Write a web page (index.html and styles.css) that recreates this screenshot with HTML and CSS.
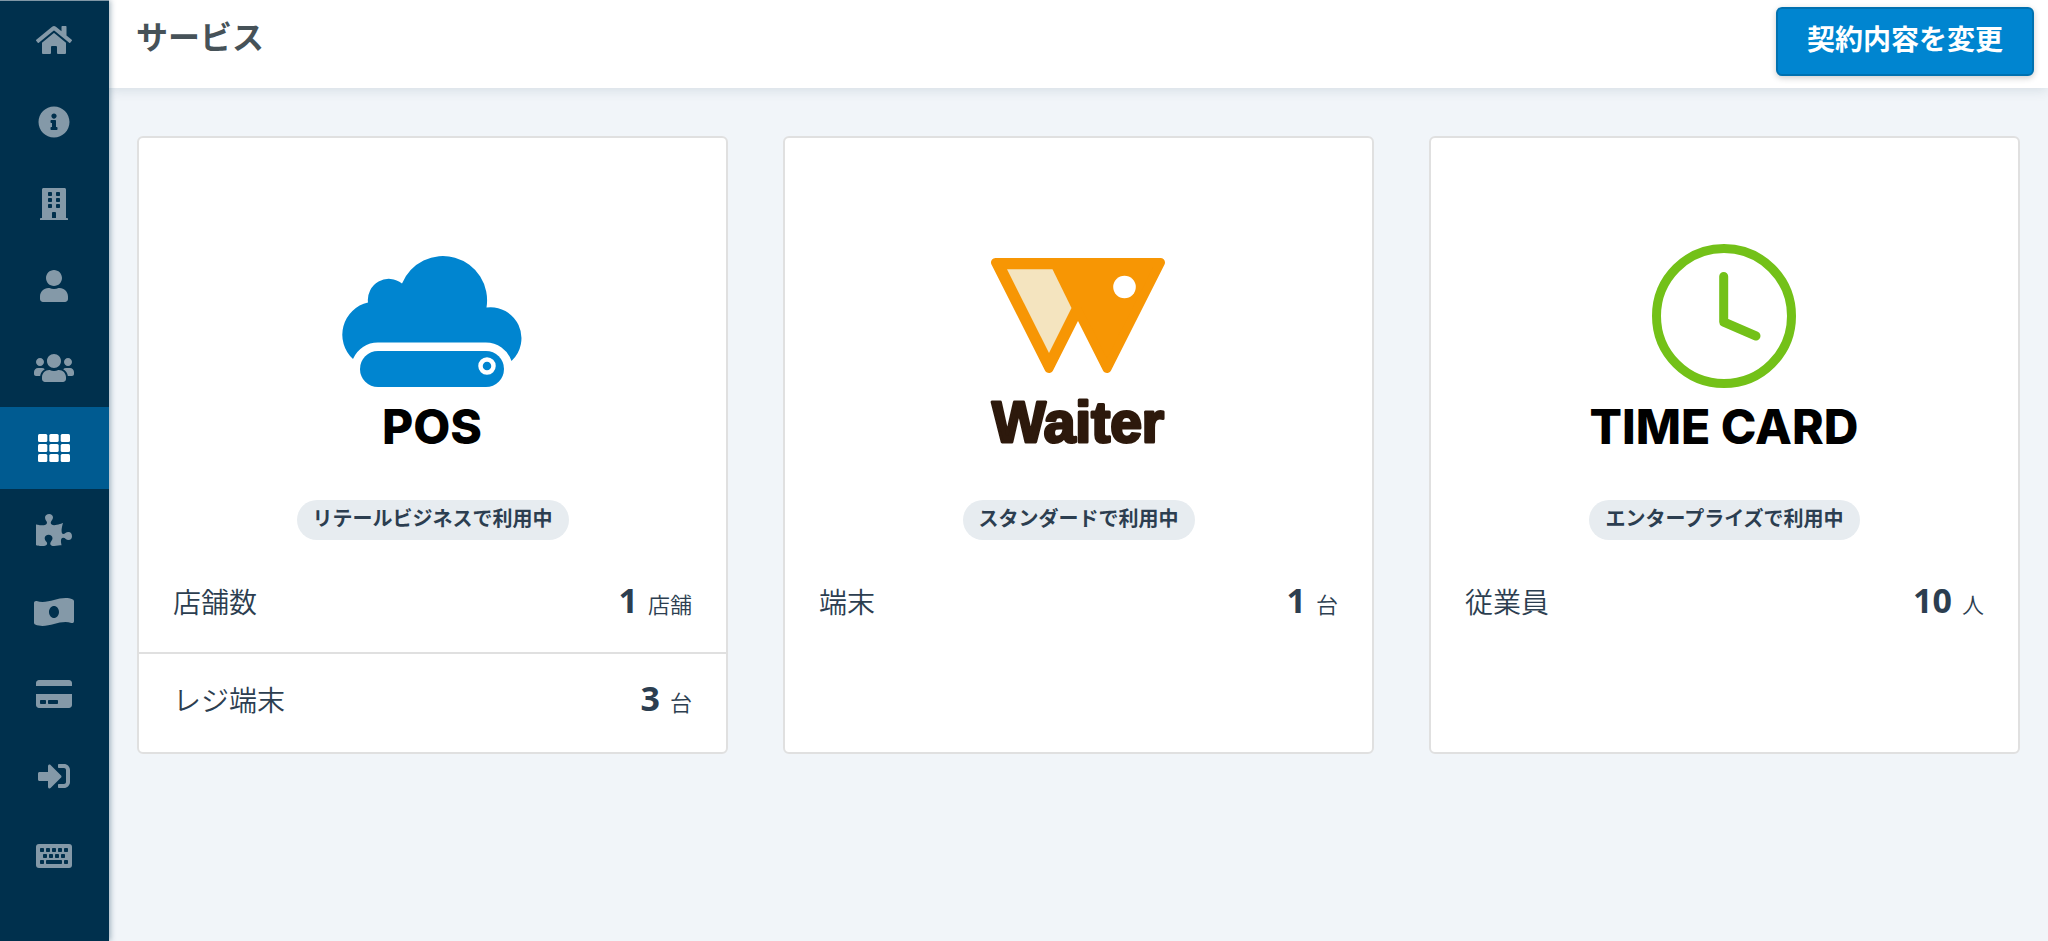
FILE: index.html
```html
<!DOCTYPE html>
<html lang="ja">
<head>
  <meta charset="UTF-8" />
  <meta name="viewport" content="width=device-width, initial-scale=1.0" />
  <title>サービス</title>
  <link rel="stylesheet" href="styles.css">
</head>
<body>
  <nav class="sidebar">
    <ul class="menu">
      <li><a href="#" aria-label="ホーム">
        <svg class="icon" viewBox="0 0 576 512" width="36" height="32"><path d="M280.37 148.26L96 300.11V464a16 16 0 0 0 16 16l112.06-.29a16 16 0 0 0 15.92-16V368a16 16 0 0 1 16-16h64a16 16 0 0 1 16 16v95.64a16 16 0 0 0 16 16.05L464 480a16 16 0 0 0 16-16V300L295.67 148.26a12.19 12.19 0 0 0-15.3 0zM571.6 251.47L488 182.56V44.05a12 12 0 0 0-12-12h-56a12 12 0 0 0-12 12v72.61L318.47 43a48 48 0 0 0-61 0L4.34 251.47a12 12 0 0 0-1.6 16.9l25.5 31A12 12 0 0 0 45.15 301l235.22-193.74a12.19 12.19 0 0 1 15.3 0L530.9 301a12 12 0 0 0 16.9-1.6l25.5-31a12 12 0 0 0-1.7-16.93z"/></svg>
      </a></li>
      <li><a href="#" aria-label="お知らせ">
        <svg class="icon" viewBox="0 0 512 512" width="32" height="32"><path d="M256 8C119.043 8 8 119.083 8 256c0 136.997 111.043 248 248 248s248-111.003 248-248C504 119.083 392.957 8 256 8zm0 110c23.196 0 42 18.804 42 42s-18.804 42-42 42-42-18.804-42-42 18.804-42 42-42zm56 254c0 6.627-5.373 12-12 12h-88c-6.627 0-12-5.373-12-12v-24c0-6.627 5.373-12 12-12h12v-64h-12c-6.627 0-12-5.373-12-12v-24c0-6.627 5.373-12 12-12h64c6.627 0 12 5.373 12 12v100h12c6.627 0 12 5.373 12 12v24z"/></svg>
      </a></li>
      <li><a href="#" aria-label="会社">
        <svg class="icon" viewBox="0 0 448 512" width="28" height="32">
          <path d="M436 480h-20V24c0-13.255-10.745-24-24-24H56C42.745 0 32 10.745 32 24v456H12c-6.627 0-12 5.373-12 12v20h448v-20c0-6.627-5.373-12-12-12z"/>
          <g class="hole">
            <rect x="128" y="64" width="64" height="64" rx="12"/><rect x="256" y="64" width="64" height="64" rx="12"/>
            <rect x="128" y="160" width="64" height="64" rx="12"/><rect x="256" y="160" width="64" height="64" rx="12"/>
            <rect x="128" y="256" width="64" height="64" rx="12"/><rect x="256" y="256" width="64" height="64" rx="12"/>
            <path d="M192 480v-84c0-6.627 5.373-12 12-12h40c6.627 0 12 5.373 12 12v84z"/>
          </g>
        </svg>
      </a></li>
      <li><a href="#" aria-label="ユーザー">
        <svg class="icon" viewBox="0 0 448 512" width="28" height="32"><path d="M224 256c70.7 0 128-57.3 128-128S294.7 0 224 0 96 57.3 96 128s57.3 128 128 128zm89.6 32h-16.7c-22.2 10.2-46.9 16-72.9 16s-50.6-5.8-72.9-16h-16.7C60.2 288 0 348.2 0 422.4V464c0 26.5 21.5 48 48 48h352c26.5 0 48-21.5 48-48v-41.6c0-74.2-60.2-134.4-134.4-134.4z"/></svg>
      </a></li>
      <li><a href="#" aria-label="メンバー">
        <svg class="icon" viewBox="0 0 640 512" width="40" height="32"><path d="M96 224c35.3 0 64-28.7 64-64s-28.7-64-64-64-64 28.7-64 64 28.7 64 64 64zm448 0c35.3 0 64-28.7 64-64s-28.7-64-64-64-64 28.7-64 64 28.7 64 64 64zm32 32h-64c-17.6 0-33.5 7.1-45.1 18.6 40.3 22.1 68.9 62 75.1 109.4h66c17.7 0 32-14.3 32-32v-32c0-35.3-28.7-64-64-64zm-256 0c61.9 0 112-50.1 112-112S381.9 32 320 32 208 82.1 208 144s50.1 112 112 112zm76.8 32h-8.3c-20.8 10-43.9 16-68.5 16s-47.6-6-68.5-16h-8.3C179.6 288 128 339.6 128 403.2V432c0 26.5 21.5 48 48 48h288c26.5 0 48-21.5 48-48v-28.8c0-63.6-51.6-115.2-115.2-115.2zm-223.7-13.4C161.5 263.1 145.6 256 128 256H64c-35.3 0-64 28.7-64 64v32c0 17.7 14.3 32 32 32h65.9c6.3-47.4 34.9-87.3 75.2-109.4z"/></svg>
      </a></li>
    </ul>
    <ul class="menu">
      <li class="active"><a href="#" aria-label="サービス">
        <svg class="icon" viewBox="0 0 512 512" width="32" height="32">
          <rect x="0" y="32" width="149" height="128" rx="24"/><rect x="181" y="32" width="150" height="128" rx="24"/><rect x="363" y="32" width="149" height="128" rx="24"/>
          <rect x="0" y="192" width="149" height="128" rx="24"/><rect x="181" y="192" width="150" height="128" rx="24"/><rect x="363" y="192" width="149" height="128" rx="24"/>
          <rect x="0" y="352" width="149" height="128" rx="24"/><rect x="181" y="352" width="150" height="128" rx="24"/><rect x="363" y="352" width="149" height="128" rx="24"/>
        </svg>
      </a></li>
      <li><a href="#" aria-label="アプリ連携">
        <svg class="icon" viewBox="0 0 576 512" width="36" height="32"><path d="M519.442 288.651c-41.519 0-59.5 31.593-82.058 31.593C377.409 320.244 432 144 432 144s-196.288 80-196.288-3.297c0-35.827 36.288-46.25 36.288-85.985C272 19.216 243.885 0 210.539 0c-34.654 0-66.366 18.891-66.366 56.346 0 41.364 31.711 59.277 31.711 81.75C175.885 207.719 0 166.758 0 166.758v333.237s178.635 41.047 178.635-28.662c0-22.473-40-40.107-40-81.471 0-37.456 29.25-56.346 63.577-56.346 33.673 0 61.788 19.216 61.788 54.717 0 39.735-36.288 50.158-36.288 85.985 0 60.803 129.675 25.73 181.23 25.73 0 0-34.725-120.101 25.827-120.101 35.962 0 46.423 36.152 86.308 36.152C556.712 416 576 387.99 576 354.443c0-34.199-18.962-65.792-56.558-65.792z"/></svg>
      </a></li>
      <li><a href="#" aria-label="請求">
        <svg class="icon" viewBox="0 0 640 512" width="40" height="32"><path d="M621.16 54.46C582.37 38.19 543.55 32 504.75 32c-123.17-.01-246.33 62.34-369.5 62.34-30.89 0-61.76-3.92-92.65-13.72-3.47-1.1-6.95-1.62-10.35-1.62C15.04 79 0 92.32 0 110.81v317.26c0 12.63 7.23 24.6 18.84 29.46C57.63 473.81 96.45 480 135.25 480c123.17 0 246.34-62.35 369.51-62.35 30.89 0 61.76 3.92 92.65 13.72 3.47 1.1 6.95 1.62 10.35 1.62 17.21 0 32.25-13.32 32.25-31.81V83.93c-.01-12.64-7.24-24.6-18.85-29.47zM320 352c-44.19 0-80-42.99-80-96 0-53.02 35.82-96 80-96s80 42.98 80 96c0 53.03-35.83 96-80 96z"/></svg>
      </a></li>
      <li><a href="#" aria-label="お支払い">
        <svg class="icon" viewBox="0 0 576 512" width="36" height="32"><path d="M0 432c0 26.5 21.5 48 48 48h480c26.5 0 48-21.5 48-48V256H0v176zm192-68c0-6.6 5.4-12 12-12h136c6.6 0 12 5.4 12 12v40c0 6.6-5.4 12-12 12H204c-6.6 0-12-5.4-12-12v-40zm-128 0c0-6.6 5.4-12 12-12h72c6.6 0 12 5.4 12 12v40c0 6.6-5.4 12-12 12H76c-6.6 0-12-5.4-12-12v-40zM576 80v48H0V80c0-26.5 21.5-48 48-48h480c26.5 0 48 21.5 48 48z"/></svg>
      </a></li>
      <li><a href="#" aria-label="ログイン">
        <svg class="icon" viewBox="0 0 512 512" width="32" height="32"><path d="M416 448h-84c-6.6 0-12-5.4-12-12v-40c0-6.6 5.4-12 12-12h84c17.7 0 32-14.3 32-32V160c0-17.7-14.3-32-32-32h-84c-6.6 0-12-5.4-12-12V76c0-6.6 5.4-12 12-12h84c53 0 96 43 96 96v192c0 53-43 96-96 96zm-47-201L201 79c-15-15-41-4.5-41 17v96H24c-13.3 0-24 10.7-24 24v96c0 13.3 10.7 24 24 24h136v96c0 21.5 26 32 41 17l168-168c9.3-9.4 9.3-24.6 0-34z"/></svg>
      </a></li>
    </ul>
    <ul class="menu">
      <li><a href="#" aria-label="キーボード">
        <svg class="icon" viewBox="0 0 576 512" width="36" height="32">
          <rect x="0" y="64" width="576" height="384" rx="48"/>
          <g class="hole">
            <rect x="64" y="128" width="64" height="64" rx="12"/><rect x="160" y="128" width="64" height="64" rx="12"/><rect x="256" y="128" width="64" height="64" rx="12"/><rect x="352" y="128" width="64" height="64" rx="12"/><rect x="448" y="128" width="64" height="64" rx="12"/>
            <rect x="112" y="224" width="64" height="64" rx="12"/><rect x="208" y="224" width="64" height="64" rx="12"/><rect x="304" y="224" width="64" height="64" rx="12"/><rect x="400" y="224" width="64" height="64" rx="12"/>
            <rect x="64" y="320" width="64" height="64" rx="12"/><rect x="160" y="320" width="256" height="64" rx="12"/><rect x="448" y="320" width="64" height="64" rx="12"/>
          </g>
        </svg>
      </a></li>
    </ul>
  </nav>

  <div class="page">
    <header class="header">
      <h1>サービス</h1>
      <button type="button" class="change-btn">契約内容を変更</button>
    </header>

    <main class="cards">
      <section class="card">
        <svg class="logo" viewBox="3 0 300 240" width="300" height="240">
          <path fill="#0085d0" d="M73 139A33 33 0 0 1 88 82.5A21 21 0 0 1 122 63.5A44.2 44.2 0 0 1 206.5 87.5A31 31 0 0 1 231.5 141A27 27 0 0 0 205.5 122.5H98A27 27 0 0 0 73 139z"/>
          <rect fill="#0085d0" x="80" y="131" width="144" height="36" rx="18"/>
          <circle cx="207" cy="146" r="6.5" fill="none" stroke="#fff" stroke-width="4.5"/>
          <text class="logo-name" x="152" y="224">POS</text>
        </svg>
        <span class="plan">リテールビジネスで利用中</span>
        <dl class="counts">
          <div class="row"><dt>店舗数</dt><dd><strong>1</strong>店舗</dd></div>
          <div class="row"><dt>レジ端末</dt><dd><strong>3</strong>台</dd></div>
        </dl>
      </section>

      <section class="card">
        <svg class="logo" viewBox="-11 0 300 240" width="300" height="240">
          <path fill="#f79604" stroke="#f79604" stroke-width="9" stroke-linejoin="round" d="M55.5 42.5H220.5L167 148.5L138 91L109 148.5z"/>
          <path fill="#f4e4bf" d="M67 49.3H112.5L131.5 88L109 133z"/>
          <circle cx="184.5" cy="67" r="11.3" fill="#fff"/>
          <text class="logo-waiter" x="138" y="222">Waiter</text>
        </svg>
        <span class="plan">スタンダードで利用中</span>
        <dl class="counts">
          <div class="row"><dt>端末</dt><dd><strong>1</strong>台</dd></div>
        </dl>
      </section>

      <section class="card">
        <svg class="logo" viewBox="15 0 300 240" width="300" height="240">
          <g fill="none" stroke="#73c118" stroke-width="9" stroke-linecap="round" stroke-linejoin="round">
            <circle cx="164" cy="96" r="67.5"/>
            <path d="M163.7 56.5V102L196 116"/>
          </g>
          <text class="logo-name" x="164" y="224">TIME CARD</text>
        </svg>
        <span class="plan">エンタープライズで利用中</span>
        <dl class="counts">
          <div class="row"><dt>従業員</dt><dd><strong>10</strong>人</dd></div>
        </dl>
      </section>
    </main>
  </div>
</body>
</html>
```

FILE: styles.css
```css
* {
  box-sizing: border-box;
}
body {
  display: flex;
  min-height: 100vh;
  margin: 0;
  background: #f1f5f9;
  color: #2c3e50;
  font-family: "Noto Sans CJK JP", sans-serif;
}

/* sidebar */
.sidebar {
  flex: 0 0 109px;
  background: #00304d;
  border-top: 1px solid #8097a6;
  box-shadow: 1px 0 6px rgba(0, 48, 77, 0.4);
  z-index: 2;
}
.menu {
  list-style: none;
  margin: -2px 0 0;
  padding: 0;
}
.menu a {
  display: flex;
  align-items: center;
  justify-content: center;
  height: 82px;
  padding-right: 1px;
  color: #8499a8;
}
.menu .active a {
  background: #005b91;
  color: #fff;
}
.icon {
  display: block;
  fill: currentColor;
}
.hole {
  fill: #00304d;
}

/* header */
.page {
  flex: 1;
  min-width: 0;
}
.header {
  display: flex;
  align-items: flex-start;
  justify-content: space-between;
  height: 88px;
  padding: 7px 14px 0 27px;
  background: #fff;
  box-shadow: 0 2px 12px rgba(0, 48, 77, 0.12);
}
h1 {
  margin: 0;
  color: #465258;
  font-size: 32px;
  line-height: 56px;
}
.change-btn {
  height: 69px;
  padding: 0 29px 8px;
  background: #0085d0;
  border: 2px solid #0071b0;
  border-radius: 6px;
  box-shadow: 0 2px 6px rgba(0, 0, 0, 0.2);
  color: #fff;
  font-family: inherit;
  font-size: 28px;
  font-weight: bold;
  cursor: pointer;
}

/* cards */
.cards {
  display: grid;
  grid-template-columns: repeat(3, 1fr);
  gap: 55px;
  padding: 48px 28px;
}
.card {
  display: flex;
  flex-direction: column;
  align-items: center;
  padding: 82px 0 2px;
  background: #fff;
  border: 2px solid #e0e0e0;
  border-radius: 6px;
}
.logo {
  display: block;
}
.logo-name {
  font-family: Inter, sans-serif;
  font-size: 48px;
  font-weight: 800;
  text-anchor: middle;
}
.logo-waiter {
  fill: #2d190c;
  stroke: #2d190c;
  stroke-width: 3px;
  stroke-linejoin: round;
  font-family: "Liberation Sans", sans-serif;
  font-size: 57px;
  font-weight: 700;
  text-anchor: middle;
}
.plan {
  height: 40px;
  margin: 40px 0 16px;
  padding: 0 16px;
  background: #e7ecf0;
  border-radius: 20px;
  font-size: 20px;
  font-weight: bold;
  line-height: 36px;
}
.counts {
  align-self: stretch;
  margin: 0;
}
.row {
  display: flex;
  align-items: baseline;
  justify-content: space-between;
  padding: 20px 34px 26px;
  font-size: 28px;
  font-weight: 350;
  line-height: 50px;
}
.row + .row {
  border-top: 2px solid #e0e0e0;
}
dd {
  display: flex;
  align-items: baseline;
  gap: 10px;
  margin: 0;
  font-size: 22px;
  line-height: 34px;
}
strong {
  font-family: "Noto Sans", sans-serif;
  font-size: 34px;
  font-weight: 700;
}
```
